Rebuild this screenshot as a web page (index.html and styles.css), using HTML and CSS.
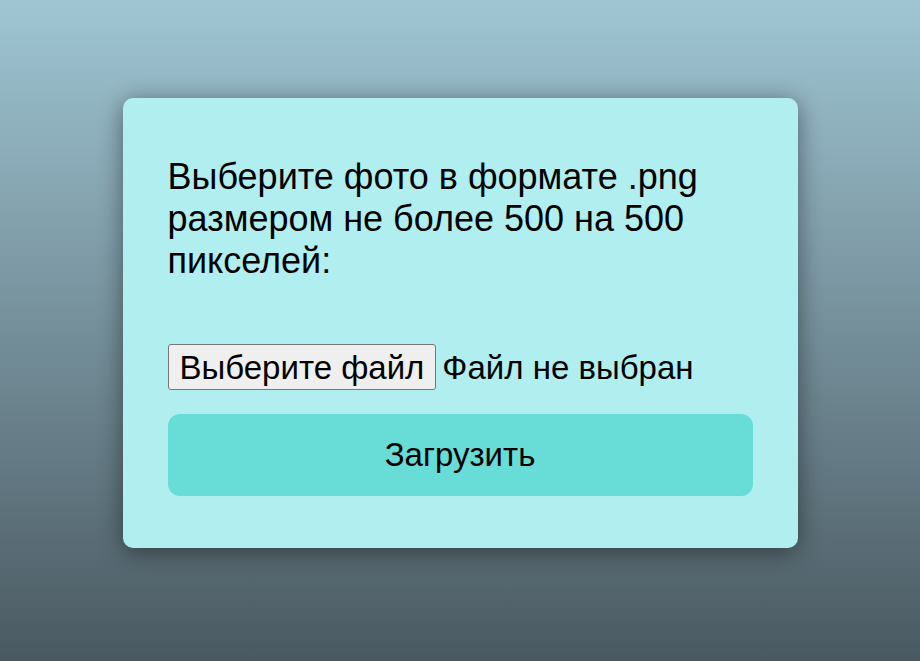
FILE: index.html
```html
<!DOCTYPE html>
<html lang="ru">
<head>
<meta charset="utf-8">
<title>Загрузка фото</title>
<link rel="stylesheet" href="styles.css">
</head>
<body>
<div class="page">
  <form class="card">
    <p class="prompt">Выберите фото в формате .png размером не более 500 на 500 пикселей:</p>
    <div class="file-row">
      <label class="file-btn">Выберите файл<input class="file-input" type="file" accept=".png"></label>
      <span class="file-name">Файл не выбран</span>
    </div>
    <button class="upload" type="button">Загрузить</button>
  </form>
</div>
</body>
</html>
```
FILE: styles.css
```css
html, body {
  margin: 0;
  height: 100%;
}
body {
  background: linear-gradient(to bottom, #9fc5d3 0%, #4a5961 100%);
  font-family: "Liberation Sans", Arial, sans-serif;
}
.page {
  display: flex;
  justify-content: center;
  padding-top: 98px;
}
.card {
  box-sizing: border-box;
  width: 675px;
  height: 450px;
  background: #b0eeef;
  border-radius: 10px;
  box-shadow: 0 4px 24px rgba(0, 0, 0, 0.45);
  padding: 58px 45px 52px;
  display: flex;
  flex-direction: column;
}
.prompt {
  margin: 0 0 62px;
  font-size: 36px;
  color: #000;
}
.file-row {
  display: flex;
  align-items: center;
  flex: none;
  height: 46px;
  font-size: 33px;
  color: #000;
}
.file-btn {
  box-sizing: border-box;
  height: 46px;
  display: flex;
  align-items: center;
  padding: 2px 11px 0;
  border: 1px solid #767676;
  border-radius: 3px;
  background: #efefef;
  position: relative;
  cursor: default;
}
.file-input {
  position: absolute;
  width: 1px;
  height: 1px;
  opacity: 0;
  overflow: hidden;
}
.file-name {
  margin-left: 6px;
  padding-top: 2px;
}
.upload {
  flex: none;
  margin-top: 24px;
  height: 82px;
  border: none;
  border-radius: 12px;
  background: #68dcd6;
  font-family: "Liberation Sans", Arial, sans-serif;
  font-size: 33px;
  color: #000;
}
```
